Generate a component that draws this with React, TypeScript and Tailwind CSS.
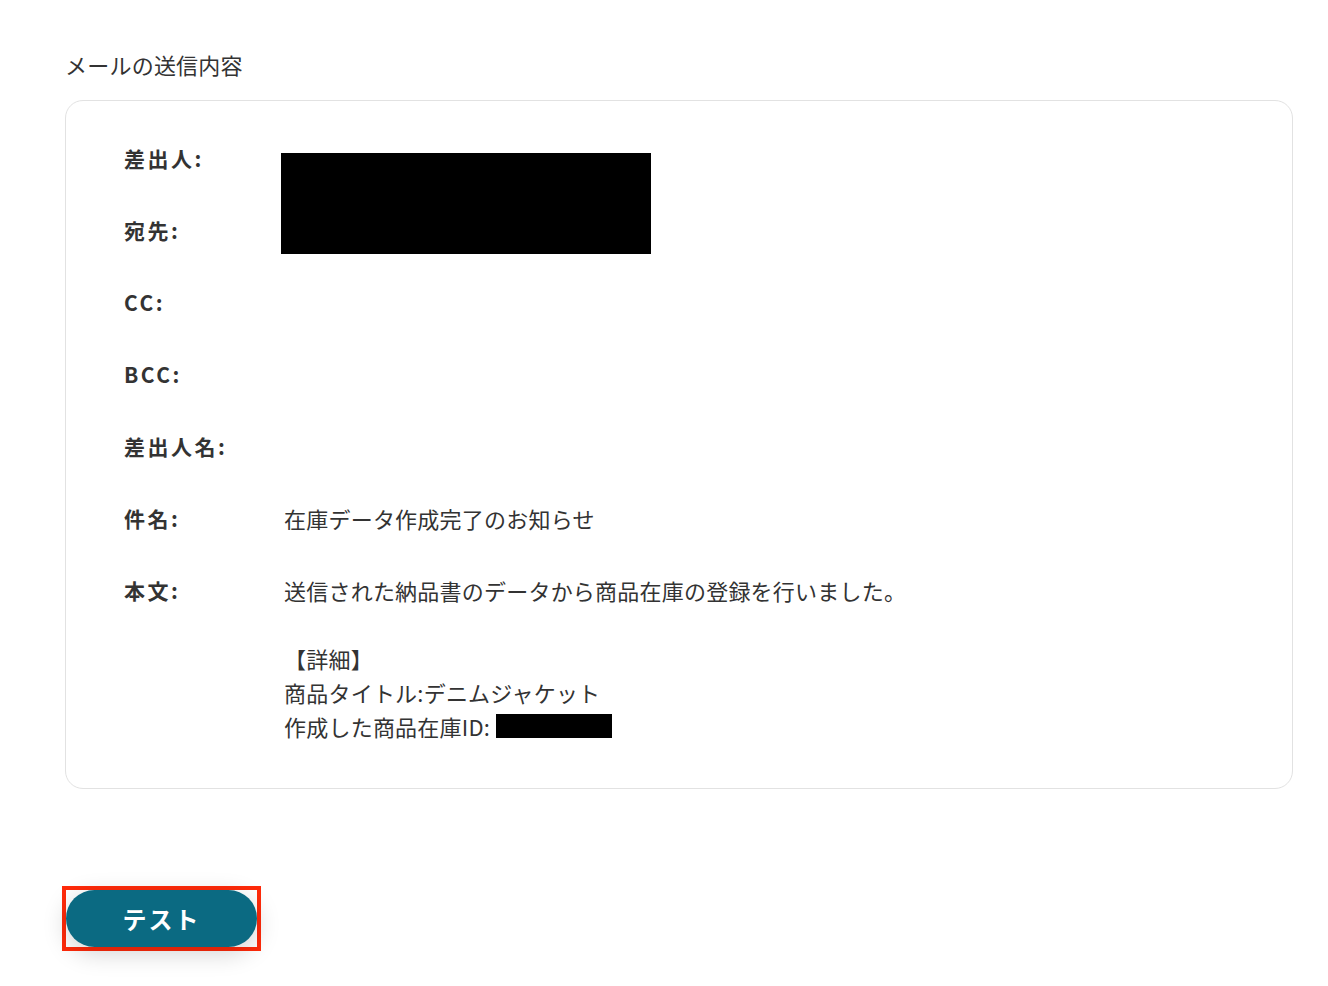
const font = { fontFamily: '"Noto Sans CJK JP", "Noto Sans", sans-serif' };

interface Row {
  label: string;
  value?: string;
}

const rows: Row[] = [
  { label: '差出人:' },
  { label: '宛先:' },
  { label: 'CC:' },
  { label: 'BCC:' },
  { label: '差出人名:' },
  { label: '件名:', value: '在庫データ作成完了のお知らせ' },
];

export default function App() {
  return (
    <div className="min-h-screen bg-white text-[#333333]" style={font}>
      <div className="pl-[65px] pr-[35px] pt-[50px]">
        <h2 className="text-[22px] leading-[28px] tracking-[0.01em]">メールの送信内容</h2>

        <div className="relative mt-[22px] rounded-[18px] border border-[#e2e2e2] pl-[58px] pr-10 pt-[38px] pb-[45px]">
          {/* redacted sender / recipient */}
          <div className="absolute left-[215px] top-[52px] h-[101px] w-[370px] bg-black" />

          <div className="flex flex-col gap-[34px]">
            {rows.map((row) => (
              <div key={row.label} className="flex items-center">
                <div className="w-[160px] shrink-0 text-[21px] leading-[38px] font-bold tracking-[0.12em]">
                  {row.label}
                </div>
                <div className="text-[22px] leading-[38px] tracking-[0.01em]">{row.value}</div>
              </div>
            ))}

            <div className="flex items-start">
              <div className="w-[160px] shrink-0 text-[21px] leading-[38px] font-bold tracking-[0.12em]">
                本文:
              </div>
              <div className="pt-[2px] text-[22px] leading-[34px] tracking-[0.01em]">
                <p>送信された納品書のデータから商品在庫の登録を行いました。</p>
                <p className="h-[34px]" />
                <p>【詳細】</p>
                <p>商品タイトル:デニムジャケット</p>
                <p className="flex items-center">
                  作成した商品在庫ID:
                  <span className="ml-[6px] inline-block h-[24px] w-[116px] bg-black" />
                </p>
              </div>
            </div>
          </div>
        </div>

        <div className="mt-[97px] ml-[-3px] inline-block border-[4px] border-[#ff2a0a]">
          <button className="flex h-[57px] w-[191px] items-center justify-center rounded-full bg-[#0b6a82] text-[24px] font-bold tracking-[0.08em] text-white shadow-[0_6px_24px_rgba(0,0,0,0.18)]">
            テスト
          </button>
        </div>
      </div>
    </div>
  );
}
